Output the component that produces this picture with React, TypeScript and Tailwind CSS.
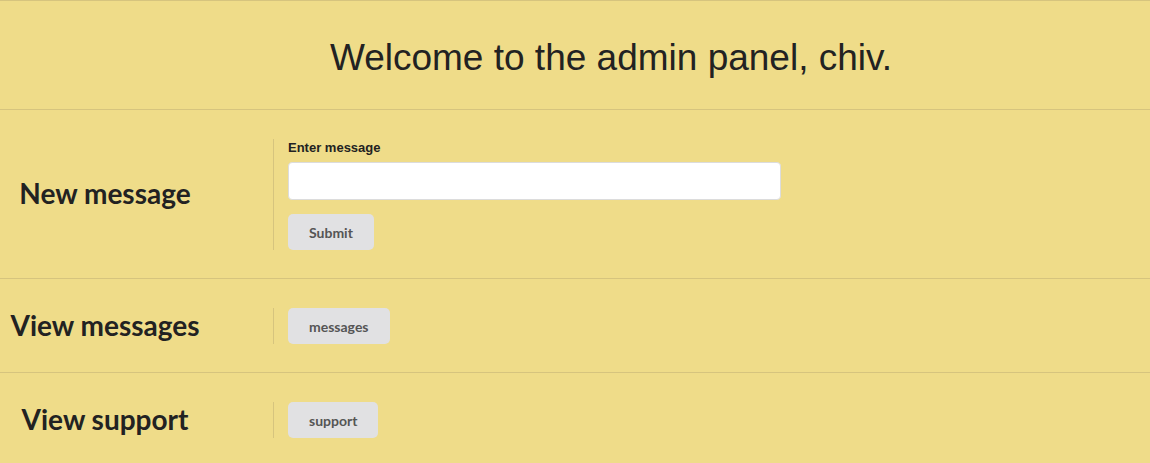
import React from "react";

function Btn({ children }: { children: React.ReactNode }) {
  return (
    <button
      type="button"
      className="h-[36px] px-[21px] rounded-[5px] bg-[#e1e1e3] text-[#555] text-[14px] font-bold font-['Lato',sans-serif]"
    >
      {children}
    </button>
  );
}

function Section({ title, children, last }: { title: string; children: React.ReactNode; last?: boolean }) {
  return (
    <div className={`flex items-center pt-[29px] pb-[28px] ${last ? "" : "border-b border-[#d6c47e]"}`}>
      <div className="w-[210px] pb-[3px] text-center text-[28px] font-bold text-[#222] font-['Lato',sans-serif] leading-none">
        {title}
      </div>
      <div className="ml-[63px] border-l border-[#d6c47e] pl-[14px]">{children}</div>
    </div>
  );
}

export default function App() {
  return (
    <div className="min-h-[463px] bg-[#efdc89] border-t border-[#d6c47e] font-['Liberation_Sans',Arial,sans-serif]">
      <div className="h-[109px] border-b border-[#d6c47e] flex items-center justify-center pl-[72px] pt-[4px]">
        <h1 className="text-[37px] text-[#222] font-['Liberation_Sans',Arial,sans-serif] leading-none">
          Welcome to the admin panel, chiv.
        </h1>
      </div>
      <Section title="New message">
        <div className="flex flex-col">
          <label className="text-[13px] font-bold text-[#222] leading-[16px] mt-[1px] mb-[6px]">Enter message</label>
          <input
            type="text"
            className="w-[493px] h-[38px] bg-white border border-[#dcdcdc] rounded-[4px] px-2 outline-none"
          />
          <div className="mt-[14px]">
            <Btn>Submit</Btn>
          </div>
        </div>
      </Section>
      <Section title="View messages">
        <Btn>messages</Btn>
      </Section>
      <Section title="View support" last>
        <Btn>support</Btn>
      </Section>
    </div>
  );
}
